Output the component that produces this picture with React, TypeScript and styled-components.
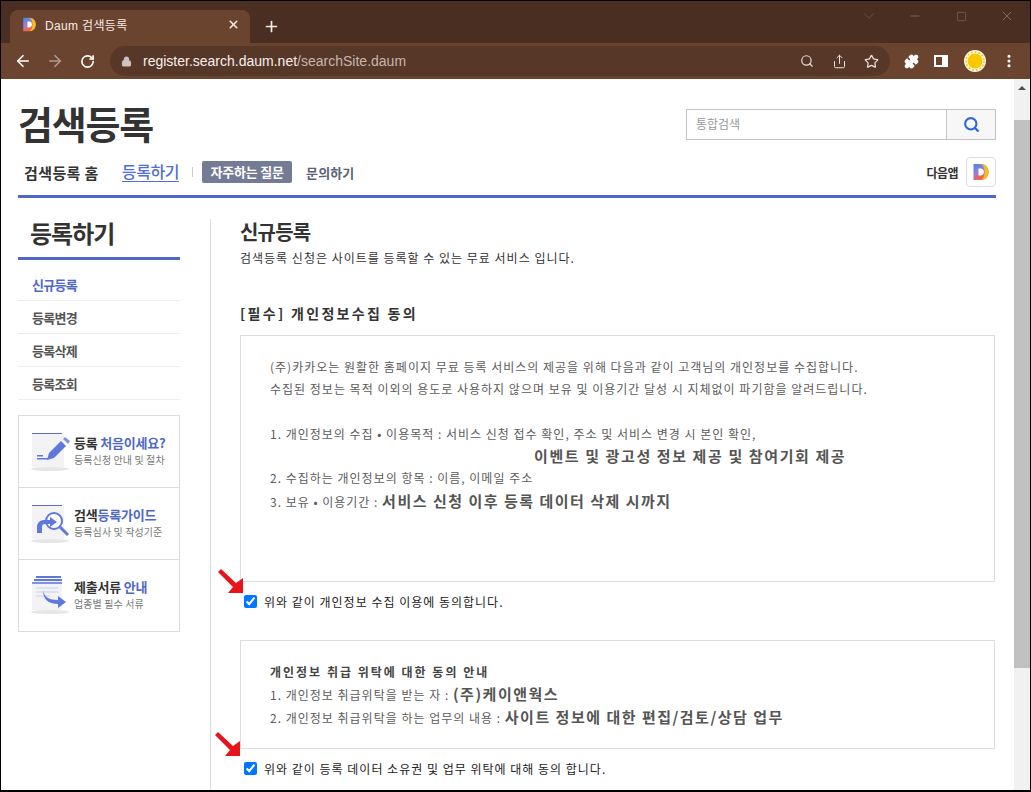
import React from "react";
import styled, { createGlobalStyle } from "styled-components";
import {
  ArrowLeft,
  ArrowRight,
  RotateCw,
  Lock,
  Search,
  Share,
  Star,
  Puzzle,
  X,
  Plus,
  ChevronDown,
  Minus,
  Square,
  MoreVertical,
} from "lucide-react";

const GlobalStyle = createGlobalStyle`
  html, body {
    margin: 0;
    padding: 0;
    background: #000;
    overflow: hidden;
  }
  * { box-sizing: border-box; }
  body {
    font-family: "Noto Sans CJK KR", "Noto Sans", sans-serif;
    color: #333;
  }
`;

const DaumLogo = ({ size }: { size: number }) => (
  <svg width={size} height={size} viewBox="2 1 17 18">
    <defs>
      <linearGradient id={`dg${size}`} x1="0.1" y1="0" x2="0.6" y2="1">
        <stop offset="0" stopColor="#4a86ea" />
        <stop offset="0.5" stopColor="#9c80cc" />
        <stop offset="0.85" stopColor="#f2604a" />
      </linearGradient>
    </defs>
    <path d="M3 2h7c5 0 8 3.500 8 8s-3 8-8 8H3z" fill={`url(#dg${size})`} />
    <path d="M10 2c5 0 8 3.500 8 8s-3 8-8 8c3-1 4-4 4-8s-1-7-4-8z" fill="#f6bd1e" />
    <path d="M8 6.500h2c2 0 3.400 1.500 3.400 3.500S12 13.500 10 13.500H8z" fill="#fff" />
  </svg>
);

const PenIcon = () => (
  <svg width="44" height="42" viewBox="0 0 44 42">
    <ellipse cx="20" cy="38" rx="19" ry="2" fill="#e6e6e6" />
    <rect x="2" y="3" width="32" height="33" fill="#f3f3f5" />
    <rect x="2" y="2" width="30" height="1" fill="#5a6fd0" />
    <path d="M19 22l12-12 5 5-12 12-7 2z" fill="#5f78dc" />
    <path d="M33 8l2-2 5 4-2 3z" fill="#8094e4" />
    <path d="M7 24h6v1.500H7zM7 27h11v1.500H7z" fill="#5f78dc" />
  </svg>
);

const LensIcon = () => (
  <svg width="44" height="42" viewBox="0 0 44 42">
    <ellipse cx="20" cy="38" rx="19" ry="2" fill="#e6e6e6" />
    <rect x="2" y="3" width="32" height="33" fill="#f3f3f5" />
    <rect x="2" y="2" width="30" height="1" fill="#5a6fd0" />
    <circle cx="24" cy="18" r="8" fill="#fff" stroke="#5f78dc" strokeWidth="2" />
    <path d="M30 24l8 8" stroke="#5f78dc" strokeWidth="3" />
    <path d="M7 30v-6c0-4 3-7 7-7h6v-3l7 5-7 5v-3h-5c-2 0-3 1-3 3v6z" fill="#5f78dc" />
  </svg>
);

const DocsIcon = () => (
  <svg width="44" height="42" viewBox="0 0 44 42">
    <ellipse cx="20" cy="37" rx="19" ry="2" fill="#e6e6e6" />
    <rect x="2" y="6" width="30" height="29" fill="#f3f3f5" />
    <path d="M6 1h25v2H6zM4 4h28v2H4z" fill="#5f78dc" />
    <path d="M2 7h30v2H2z" fill="#7f92e4" />
    <path d="M6 13h22M6 17h22M6 21h14" stroke="#c7cff0" strokeWidth="1" />
    <path d="M13 15c1 7 6 10 15 10v-4l8 6-8 6v-4c-10 0-15-5-15-14z" fill="#5f78dc" />
  </svg>
);

const SunAvatar = () => (
  <svg width="22" height="22" viewBox="0 0 22 22">
    <circle cx="11" cy="11" r="11" fill="#fdf6e0" />
    <circle cx="11" cy="11" r="7.500" fill="#f8c800" />
    <circle cx="11" cy="11" r="9" fill="none" stroke="#f8c800" strokeWidth="1.600" strokeDasharray="1.800 2" />
  </svg>
);

const RedArrow = ({ $left, $top }: { $left: number; $top: number }) => (
  <ArrowSvg $left={$left} $top={$top} width="26" height="25" viewBox="0 0 26 25">
    <path d="M0 3L3 0L18 14L25 9V24H10L15 18Z" fill="#e8141c" />
  </ArrowSvg>
);

export default function App() {
  return (
    <>
      <GlobalStyle />
      <Frame>
        <TabStrip>
          <Tab>
            <DaumLogo size={15} />
            <TabTitle>Daum 검색등록</TabTitle>
            <X size={13} strokeWidth={3} color="#f4ece8" />
          </Tab>
          <NewTab>
            <Plus size={17} strokeWidth={2.4} />
          </NewTab>
          <WindowControls>
            <ChevronDown size={18} strokeWidth={1.2} />
            <Minus size={14} strokeWidth={1.2} />
            <Square size={11} strokeWidth={1.2} />
            <X size={16} strokeWidth={1.2} />
          </WindowControls>
        </TabStrip>
        <Toolbar>
          <NavButton>
            <ArrowLeft size={18} strokeWidth={2.2} />
          </NavButton>
          <NavButton $dim>
            <ArrowRight size={18} strokeWidth={2.2} />
          </NavButton>
          <NavButton>
            <RotateCw size={15} strokeWidth={2.6} />
          </NavButton>
          <Omnibox>
            <Lock size={11} color="#cfc4bd" fill="#cfc4bd" />
            <Url>
              register.search.daum.net<UrlPath>/searchSite.daum</UrlPath>
            </Url>
            <OmniIcons>
              <Search size={14} strokeWidth={2} />
              <Share size={15} strokeWidth={1.6} />
              <Star size={15} strokeWidth={2} />
            </OmniIcons>
          </Omnibox>
          <ToolIcons>
            <Puzzle size={15} fill="#fff" color="#fff" />
            <PanelIcon />
            <SunAvatar />
            <MoreVertical size={16} strokeWidth={2.6} />
          </ToolIcons>
        </Toolbar>
        <Viewport>
          <Page>
            <Header>
              <TitleRow>
                <SiteTitle>검색등록</SiteTitle>
                <SearchBox>
                  <SearchInput>통합검색</SearchInput>
                  <SearchButton>
                    <Search size={17} strokeWidth={3} color="#2f68d0" />
                  </SearchButton>
                </SearchBox>
              </TitleRow>
              <GlobalNav>
                <HomeLink>검색등록 홈</HomeLink>
                <ActiveLink>등록하기</ActiveLink>
                <NavSep />
                <Badge>자주하는 질문</Badge>
                <QuietLink>문의하기</QuietLink>
                <AppLink>
                  <AppLabel>다음앱</AppLabel>
                  <AppButton>
                    <DaumLogo size={18} />
                  </AppButton>
                </AppLink>
              </GlobalNav>
            </Header>
            <Body>
              <Sidebar>
                <SideTitle>등록하기</SideTitle>
                <SideMenu>
                  <SideItem $active>신규등록</SideItem>
                  <SideItem>등록변경</SideItem>
                  <SideItem>등록삭제</SideItem>
                  <SideItem>등록조회</SideItem>
                </SideMenu>
                <GuideBox>
                  <GuideRow>
                    <PenIcon />
                    <GuideText>
                      <GuideTitle>
                        등록 <em>처음이세요?</em>
                      </GuideTitle>
                      <GuideSub>등록신청 안내 및 절차</GuideSub>
                    </GuideText>
                  </GuideRow>
                  <GuideRow>
                    <LensIcon />
                    <GuideText>
                      <GuideTitle>
                        검색<em>등록가이드</em>
                      </GuideTitle>
                      <GuideSub>등록심사 및 작성기준</GuideSub>
                    </GuideText>
                  </GuideRow>
                  <GuideRow>
                    <DocsIcon />
                    <GuideText>
                      <GuideTitle>
                        제출서류 <em>안내</em>
                      </GuideTitle>
                      <GuideSub>업종별 필수 서류</GuideSub>
                    </GuideText>
                  </GuideRow>
                </GuideBox>
              </Sidebar>
              <Content>
                <PageHeading>신규등록</PageHeading>
                <Intro>검색등록 신청은 사이트를 등록할 수 있는 무료 서비스 입니다.</Intro>
                <SectionTitle>[필수] 개인정보수집 동의</SectionTitle>
                <TermsBox $height={247}>
                  <Line>(주)카카오는 원활한 홈페이지 무료 등록 서비스의 제공을 위해 다음과 같이 고객님의 개인정보를 수집합니다.</Line>
                  <Line>수집된 정보는 목적 이외의 용도로 사용하지 않으며 보유 및 이용기간 달성 시 지체없이 파기함을 알려드립니다.</Line>
                  <Line>&nbsp;</Line>
                  <Line>1. 개인정보의 수집 • 이용목적 : 서비스 신청 접수 확인, 주소 및 서비스 변경 시 본인 확인,</Line>
                  <LineIndent>이벤트 및 광고성 정보 제공 및 참여기회 제공</LineIndent>
                  <Line>2. 수집하는 개인정보의 항목 : 이름, 이메일 주소</Line>
                  <Line>
                    3. 보유 • 이용기간 : <Strong>서비스 신청 이후 등록 데이터 삭제 시까지</Strong>
                  </Line>
                </TermsBox>
                <AgreeRow>
                  <RedArrow $left={-22} $top={-13} />
                  <Check type="checkbox" defaultChecked />
                  <AgreeLabel>위와 같이 개인정보 수집 이용에 동의합니다.</AgreeLabel>
                </AgreeRow>
                <TermsBox $height={109}>
                  <BoxHeading>개인정보 취급 위탁에 대한 동의 안내</BoxHeading>
                  <Line>
                    1. 개인정보 취급위탁을 받는 자 : <Strong>(주)케이앤웍스</Strong>
                  </Line>
                  <Line>
                    2. 개인정보 취급위탁을 하는 업무의 내용 : <Strong>사이트 정보에 대한 편집/검토/상담 업무</Strong>
                  </Line>
                </TermsBox>
                <AgreeRow>
                  <RedArrow $left={-25} $top={-17} />
                  <Check type="checkbox" defaultChecked />
                  <AgreeLabel>위와 같이 등록 데이터 소유권 및 업무 위탁에 대해 동의 합니다.</AgreeLabel>
                </AgreeRow>
              </Content>
            </Body>
          </Page>
          <Scrollbar>
            <ScrollUp />
            <ScrollThumb />
          </Scrollbar>
        </Viewport>
      </Frame>
    </>
  );
}

const Frame = styled.div`
  width: 1031px;
  height: 792px;
  padding: 1px 1px 2px 1px;
  background: #000;
  display: flex;
  flex-direction: column;
  overflow: hidden;
`;

const TabStrip = styled.div`
  height: 42px;
  flex: none;
  background: #4a2e22;
  display: flex;
  align-items: flex-end;
  padding-left: 9px;
  color: #fff;
`;

const Tab = styled.div`
  width: 240px;
  height: 33px;
  background: #6b4430;
  border-radius: 8px 8px 0 0;
  display: flex;
  align-items: center;
  padding: 0 10px 4px 12px;
  color: #f4ece8;
`;

const TabTitle = styled.span`
  flex: 1;
  margin-left: 8px;
  font-family: "Liberation Sans", "Noto Sans CJK KR", sans-serif;
  font-size: 12px;
  letter-spacing: 0.35px;
`;

const NewTab = styled.div`
  width: 17px;
  margin: 0 0 8px 13px;
  height: 17px;
  display: flex;
  color: #f4ece8;
`;

const WindowControls = styled.div`
  margin-left: auto;
  height: 100%;
  padding-bottom: 12px;
  display: grid;
  grid-template-columns: repeat(4, 46px);
  place-items: center;
  color: #8d786c;
  & > svg:first-child { color: #6e5547; }
`;

const Toolbar = styled.div`
  height: 36px;
  flex: none;
  background: #6b4430;
  display: flex;
  align-items: center;
  padding: 0 13px 0 6px;
  color: #fff;
`;

const NavButton = styled.div<{ $dim?: boolean }>`
  width: 32px;
  display: flex;
  justify-content: center;
  color: ${(p) => (p.$dim ? "#ae9a8e" : "#fff")};
`;

const Omnibox = styled.div`
  width: 780px;
  height: 30px;
  margin-left: 7px;
  border-radius: 15px;
  background: #573728;
  display: flex;
  align-items: center;
  padding: 0 11px;
`;

const Url = styled.span`
  margin-left: 11px;
  font-family: "Liberation Sans", sans-serif;
  font-size: 14px;
  color: #f6f0ec;
`;

const UrlPath = styled.span`
  color: #c6b6ac;
`;

const OmniIcons = styled.div`
  margin-left: auto;
  width: 79px;
  display: flex;
  align-items: center;
  justify-content: space-between;
  color: #e9e0da;
`;

const ToolIcons = styled.div`
  margin-left: 14px;
  flex: 1;
  display: flex;
  align-items: center;
  justify-content: space-between;
  color: #fff;
`;

const PanelIcon = styled.div`
  width: 14px;
  height: 12px;
  border: 2px solid #fff;
  border-right-width: 6px;
`;

const Viewport = styled.div`
  flex: 1;
  min-height: 0;
  display: flex;
  background: #fff;
  overflow: hidden;
`;

const Page = styled.div`
  flex: 1;
  min-width: 0;
  padding: 0 18px 0 17px;
  display: flex;
  flex-direction: column;
`;

const Header = styled.header`
  flex: none;
  height: 119px;
  border-bottom: 3px solid #4f68c8;
`;

const TitleRow = styled.div`
  display: flex;
  justify-content: space-between;
  height: 78px;
  padding-top: 19px;
`;

const SiteTitle = styled.h1`
  margin: 0;
  font-size: 38px;
  line-height: 50px;
  font-weight: 700;
  letter-spacing: -1.2px;
  color: #333;
`;

const SearchBox = styled.div`
  width: 310px;
  height: 31px;
  margin-top: 11px;
  border: 1px solid #c4c4c4;
  display: flex;
`;

const SearchInput = styled.div`
  flex: 1;
  padding-left: 9px;
  font-size: 12px;
  line-height: 28px;
  color: #999;
`;

const SearchButton = styled.div`
  width: 49px;
  background: #f7f7f7;
  border-left: 1px solid #c4c4c4;
  display: flex;
  align-items: center;
  justify-content: center;
`;

const GlobalNav = styled.nav`
  display: flex;
  align-items: center;
  height: 30px;
  padding-left: 6px;
`;

const HomeLink = styled.span`
  font-size: 15px;
  font-weight: 700;
  letter-spacing: 0.4px;
  color: #333;
`;

const ActiveLink = styled.span`
  margin-left: 23px;
  font-size: 16px;
  font-weight: 500;
  letter-spacing: -0.4px;
  line-height: 19px;
  color: #4f6fd8;
  border-bottom: 1px solid #4f6fd8;
`;

const NavSep = styled.span`
  width: 1px;
  height: 10px;
  margin: 0 9px 0 13px;
  background: #ccc;
`;

const Badge = styled.span`
  width: 90px;
  height: 22px;
  background: #737c94;
  border-radius: 2px;
  color: #fff;
  font-size: 13px;
  font-weight: 700;
  letter-spacing: -0.2px;
  line-height: 21px;
  text-align: center;
`;

const QuietLink = styled.span`
  margin-left: 14px;
  font-size: 13px;
  font-weight: 700;
  letter-spacing: 0.1px;
  color: #5a6375;
`;

const AppLink = styled.div`
  margin-left: auto;
  display: flex;
  align-items: center;
`;

const AppLabel = styled.span`
  font-size: 12px;
  font-weight: 700;
  letter-spacing: -0.5px;
  color: #333;
`;

const AppButton = styled.div`
  width: 30px;
  height: 30px;
  margin-left: 8px;
  border: 1px solid #ddd;
  border-radius: 4px;
  display: flex;
  align-items: center;
  justify-content: center;
`;

const Body = styled.div`
  flex: 1;
  min-height: 0;
  display: flex;
  padding-top: 21px;
`;

const Sidebar = styled.aside`
  width: 162px;
  flex: none;
`;

const SideTitle = styled.h2`
  margin: 0;
  height: 41px;
  padding-left: 12px;
  border-bottom: 3px solid #4f68c8;
  font-size: 24px;
  line-height: 27px;
  font-weight: 700;
  letter-spacing: -1px;
  color: #333;
`;

const SideMenu = styled.ul`
  list-style: none;
  margin: 8px 0 15px;
  padding: 0;
`;

const SideItem = styled.li<{ $active?: boolean }>`
  height: 33px;
  padding-left: 14px;
  border-bottom: 1px solid #eee;
  font-size: 13px;
  line-height: 33px;
  font-weight: 700;
  letter-spacing: -0.7px;
  color: ${(p) => (p.$active ? "#4f68c8" : "#555")};
`;

const GuideBox = styled.div`
  border: 1px solid #ddd;
`;

const GuideRow = styled.div`
  height: 72px;
  display: flex;
  align-items: center;
  padding-left: 11px;
  &:first-child { height: 71px; }
  & + & { border-top: 1px solid #ddd; }
`;

const GuideText = styled.div`
  display: flex;
  flex-direction: column;
  padding-bottom: 2px;
`;

const GuideTitle = styled.strong`
  font-size: 13px;
  line-height: 18px;
  font-weight: 700;
  letter-spacing: -0.2px;
  color: #333;
  & em {
    font-style: normal;
    color: #4f68c8;
  }
`;

const GuideSub = styled.span`
  font-size: 10px;
  line-height: 16px;
  letter-spacing: 0.1px;
  color: #777;
`;

const Content = styled.main`
  flex: 1;
  min-width: 0;
  margin-left: 30px;
  padding-left: 29px;
  border-left: 1px solid #ddd;
`;

const PageHeading = styled.h2`
  margin: 0;
  font-size: 20px;
  line-height: 26px;
  font-weight: 700;
  letter-spacing: -0.8px;
  color: #333;
`;

const Intro = styled.p`
  margin: 2px 0 0;
  font-size: 12px;
  line-height: 22px;
  letter-spacing: 1px;
  color: #333;
`;

const SectionTitle = styled.h3`
  margin: 32px 0 0;
  height: 34px;
  font-size: 14px;
  line-height: 24px;
  font-weight: 700;
  letter-spacing: 2.3px;
  color: #333;
`;

const TermsBox = styled.div<{ $height: number }>`
  height: ${(p) => p.$height}px;
  margin-right: 1px;
  border: 1px solid #ddd;
  padding: 20px 29px 0;
`;

const Line = styled.div`
  height: 22.250px;
  font-size: 12px;
  line-height: 22.250px;
  letter-spacing: 1px;
  color: #5c5c5c;
  white-space: nowrap;
`;

const LineIndent = styled(Line)`
  padding-left: 264px;
  font-size: 15px;
  font-weight: 700;
  letter-spacing: 1.6px;
  color: #555;
`;

const Strong = styled.b`
  font-size: 15px;
  font-weight: 700;
  letter-spacing: 1.5px;
  color: #555;
`;

const BoxHeading = styled(Line)`
  font-weight: 700;
  letter-spacing: 2px;
  color: #444;
`;

const AgreeRow = styled.label`
  position: relative;
  display: flex;
  align-items: center;
  height: 38px;
  margin-bottom: 20px;
  padding-left: 4px;
`;

const ArrowSvg = styled.svg<{ $left: number; $top: number }>`
  position: absolute;
  left: ${(p) => p.$left}px;
  top: ${(p) => p.$top}px;
`;

const Check = styled.input`
  width: 13px;
  height: 13px;
  margin: 0 7px 0 0;
  accent-color: #0075ff;
`;

const AgreeLabel = styled.span`
  font-size: 12px;
  letter-spacing: 1px;
  color: #222;
`;

const Scrollbar = styled.div`
  width: 16px;
  flex: none;
  background: #f1f1f1;
  padding-top: 17px;
  position: relative;
`;

const ScrollUp = styled.div`
  position: absolute;
  top: 7px;
  left: 4px;
  border: 4px solid transparent;
  border-top: 0;
  border-bottom-color: #505050;
`;

const ScrollThumb = styled.div`
  height: 548px;
  margin-top: 24px;
  background: #c1c1c1;
`;
